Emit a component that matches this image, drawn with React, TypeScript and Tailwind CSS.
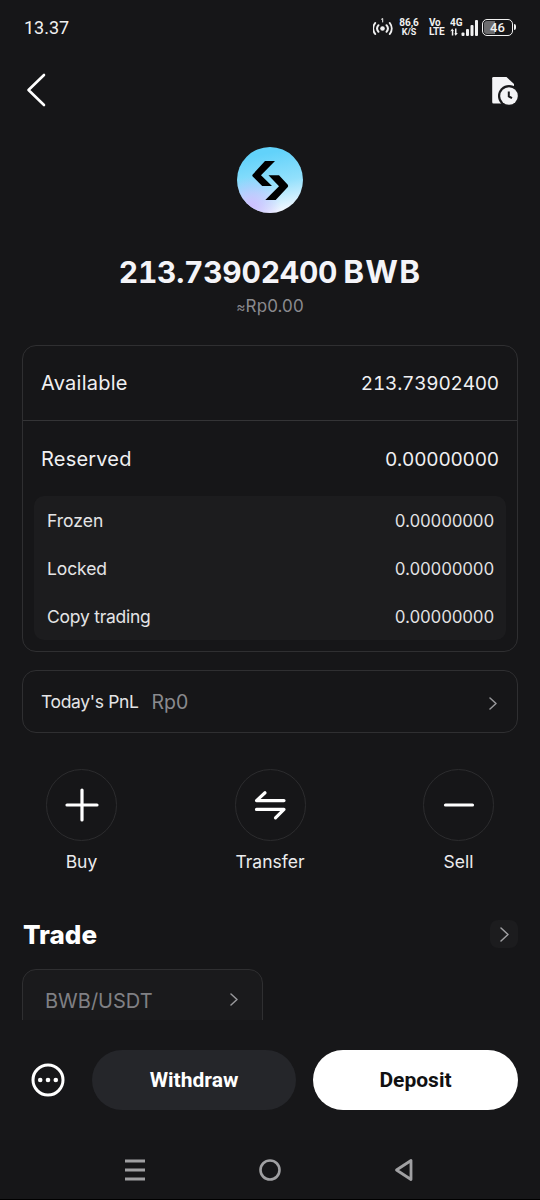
import { ReactNode } from "react";

const reserved = [
    { label: "Frozen", value: "0.00000000", tracking: "tracking-[0px]" },
    { label: "Locked", value: "0.00000000", tracking: "tracking-[-0.1px]" },
    { label: "Copy trading", value: "0.00000000", tracking: "tracking-[-0.25px]" },
];

function Chevron({ width, height, className }: { width: number; height: number; className?: string }) {
    return (
        <svg width={width} height={height} viewBox={`0 0 ${width} ${height}`} fill="none" className={className}>
            <path
                d={`M1 1L${width - 1} ${height / 2}L1 ${height - 1}`}
                stroke="currentColor"
                strokeWidth="1.5"
                strokeLinecap="round"
                strokeLinejoin="round"
            />
        </svg>
    );
}

function StatusBar() {
    return (
        <div className="flex h-14 items-center justify-between pl-6 pr-6 font-[Roboto,sans-serif] text-[#f1f1f1]">
            <span className="text-lg">13.37</span>
            <div className="flex h-[22px] items-center">
                <svg width="22" height="22" viewBox="0 0 22 22" fill="none" stroke="currentColor" strokeWidth="2" strokeLinecap="round">
                    <circle cx="9.500" cy="11.500" r="2.300" fill="currentColor" stroke="none" />
                    <path d="M5.500 8.200a5 5 0 0 0 0 6.600M13.500 8.200a5 5 0 0 1 0 6.600M2.200 6a9 9 0 0 0 0 11M16.800 6a9 9 0 0 1 0 11" />
                    <path d="M8.500 2.200L9.700 1.500V5" strokeWidth="1" />
                </svg>
                <div className="ml-[3px] mr-px w-[22px] -translate-y-px text-center font-bold">
                    <div className="text-[10px] leading-[10px] tracking-[-0.1px]">86,6</div>
                    <div className="text-[9px] leading-[9px]">K/S</div>
                </div>
                <div className="ml-[8px] w-[17px] -translate-y-px text-[10px] font-bold leading-[9px] tracking-[-0.3px]">
                    <div>Vo</div>
                    <div>LTE</div>
                </div>
                <svg width="30" height="20" viewBox="0 0 30 20" className="ml-[4px]" fill="currentColor">
                    <text x="0" y="8" fontSize="10" fontWeight="700">4G</text>
                    <path d="M2.200 10.500L4 13H3.300V17.500H1.800V12.800L0.200 13.500ZM5 10.500H6.500V15H7.800L5.700 17.800L4.200 15.500H5Z" />
                    <rect x="11.500" y="14.500" width="3" height="3.500" rx="1" />
                    <rect x="16" y="11" width="3" height="7" rx="1" />
                    <rect x="20.500" y="7" width="3" height="11" rx="1" />
                    <rect x="25" y="2" width="3" height="16" rx="1" />
                </svg>
                <div className="ml-[2px] flex h-[17px] w-[31px] -translate-y-px items-center justify-center rounded-[5px] border-[1.500px] border-[#f1f1f1] bg-linear-to-r from-[#6c6c6e] from-42% to-transparent to-42% bg-clip-content p-px">
                    <span className="text-[13px] font-medium leading-none">46</span>
                </div>
                <div className="ml-px h-[6px] w-[2px] -translate-y-px rounded-r bg-[#f1f1f1]" />
            </div>
        </div>
    );
}

function Header() {
    return (
        <div className="flex h-[72px] items-start justify-between pl-[26px] pr-[21px] pt-[16px]">
            <svg width="20" height="36" viewBox="0 0 20 36" fill="none">
                <path d="M18 3L2.500 18L18 33" stroke="#fff" strokeWidth="2.600" strokeLinecap="round" strokeLinejoin="round" />
            </svg>
            <svg width="28" height="32" viewBox="0 0 28 32" className="mt-[3px]" fill="none">
                <path d="M2.500 2H15.500L23 9V27.500Q23 28.500 22 28.500H2.500Q1.200 28.500 1.200 27V3.300Q1.200 2 2.500 2Z" fill="#f4f4f6" />
                <circle cx="18" cy="21" r="11" fill="#19191b" />
                <circle cx="18" cy="21" r="8.800" fill="#f4f4f6" />
                <path d="M17.800 16.500V21.500L21 23.200" stroke="#19191b" strokeWidth="2" />
            </svg>
        </div>
    );
}

function TokenLogo() {
    return (
        <svg width="66" height="66" viewBox="0 0 66 66">
            <defs>
                <linearGradient id="sky" x1="0.400" y1="0" x2="0.600" y2="1">
                    <stop offset="0.100" stopColor="#62d2fa" />
                    <stop offset="0.550" stopColor="#92e0fc" />
                    <stop offset="1" stopColor="#f6f8ff" />
                </linearGradient>
                <radialGradient id="violet" cx="0.220" cy="0.900" r="0.450">
                    <stop offset="0" stopColor="#cdbfff" />
                    <stop offset="1" stopColor="#c6b6ff" stopOpacity="0" />
                </radialGradient>
            </defs>
            <circle cx="33" cy="33" r="33" fill="url(#sky)" />
            <circle cx="33" cy="33" r="33" fill="url(#violet)" />
            <path d="M28 14H38L24 28.300L35 39H25.200L15.700 29.500Q14.900 28.500 15.700 27.500Z" fill="#000" />
            <path d="M31.500 28.300H42L50.800 37.800Q51.600 39 50.800 40L38.700 52.900H28.300L42 39.300Z" fill="#000" />
        </svg>
    );
}

function Action({ label, children }: { label: string; children: ReactNode }) {
    return (
        <div className="flex w-[71px] flex-col items-center">
            <div className="flex h-[72px] w-[71px] items-center justify-center rounded-full border-[1.500px] border-[#2c2c2e]">
                <svg width="36" height="36" viewBox="0 0 36 36" fill="none" stroke="#fff" strokeWidth="3.200" strokeLinecap="round" strokeLinejoin="round" className="shrink-0">
                    {children}
                </svg>
            </div>
            <span className="mt-[9px] whitespace-nowrap text-[17.500px] leading-6 text-[#ececee]">{label}</span>
        </div>
    );
}

function BalanceCard() {
    return (
        <div className="mt-[27px] h-[307px] rounded-[14px] border border-[#2f2f31]">
            <div className="flex h-[75px] items-center justify-between border-b border-[#343436] px-[18px] text-[#f0f0f2]">
                <span className="text-xl tracking-[0.25px]">Available</span>
                <span className="pt-[2px] text-[19px] tabular-nums tracking-[-0.2px]">213.73902400</span>
            </div>
            <div className="flex h-[75px] items-center justify-between px-[18px] text-[#f0f0f2]">
                <span className="pt-px text-xl tracking-[0.2px]">Reserved</span>
                <span className="pt-[3px] text-[19px] tabular-nums tracking-[-0.2px]">0.00000000</span>
            </div>
            <div className="mx-[11px] h-36 rounded-[10px] bg-[#1c1c1e] pl-[13px] pr-3">
                {reserved.map((row) => (
                    <div key={row.label} className="flex h-12 items-center justify-between pt-[2px] text-[#e4e4e6]">
                        <span className={`text-[17.500px] ${row.tracking}`}>{row.label}</span>
                        <span className="pt-px text-[16.700px] tabular-nums tracking-[-0.25px]">{row.value}</span>
                    </div>
                ))}
            </div>
        </div>
    );
}

export default function App() {
    return (
        <div className="flex h-[1200px] w-[540px] flex-col overflow-hidden bg-[#161618] font-[Inter,sans-serif]">
            <StatusBar />
            <Header />
            <div className="h-[892px] overflow-hidden px-[22px] pt-[19px]">
                <div className="flex flex-col items-center">
                    <TokenLogo />
                    <div className="mt-[39px] flex h-10 items-baseline gap-[6px] whitespace-nowrap text-[30px] font-bold leading-10 text-[#f4f4f8]">
                        <span className="tabular-nums tracking-[-0.25px]">213.73902400</span>
                        <span className="text-[31.500px] tracking-[1.200px]">BWB</span>
                    </div>
                    <div className="mt-[2px] h-6 text-[17px] leading-6 tracking-[0.1px] text-[#8a8a8e]">
                        <span className="text-[14px]">≈</span>Rp0.00
                    </div>
                </div>
                <BalanceCard />
                <div className="mt-[18px] flex h-[63px] items-center rounded-[14px] border border-[#2f2f31] pl-[18px] pr-[20px] pt-[2px]">
                    <span className="text-[17.500px] tracking-[-0.35px] text-[#e4e4e6]">Today's PnL</span>
                    <span className="ml-[13px] pt-px text-[19.500px] text-[#8a8a8e]">Rp0</span>
                    <Chevron width={8} height={13} className="ml-auto mt-px text-[#98989b]" />
                </div>
                <div className="mt-9 flex justify-between px-6">
                    <Action label="Buy">
                        <path d="M18 3V33M3 18H33" />
                    </Action>
                    <Action label="Transfer">
                        <path d="M32 13.600H4.500L13 5.800M4.500 22.400H32L23.500 30.800" />
                    </Action>
                    <Action label="Sell">
                        <path d="M4.500 18H31.500" />
                    </Action>
                </div>
                <div className="mt-[45px] flex h-[30px] items-center justify-between">
                    <h2 className="pl-px text-[26px] font-extrabold text-white">Trade</h2>
                    <div className="flex size-7 items-center justify-center rounded-lg bg-[#1c1c1e]">
                        <Chevron width={9} height={15} className="text-[#a0a0a3]" />
                    </div>
                </div>
                <div className="mt-[20px] flex h-[90px] w-[241px] items-start justify-between rounded-[14px] border border-[#2f2f31] bg-[#1a1a1c] pl-[22px] pr-6 pt-[19px]">
                    <span className="text-xl leading-6 text-[#808084]">BWB/USDT</span>
                    <Chevron width={8} height={13} className="mt-[4px] text-[#98989b]" />
                </div>
            </div>
            <div className="flex h-[120px] items-center bg-[#171719] pl-[31px] pr-[22px]">
                <svg width="34" height="34" viewBox="0 0 34 34" fill="none">
                    <circle cx="17" cy="17" r="15" stroke="#fff" strokeWidth="3" />
                    <circle cx="9.200" cy="17" r="2.300" fill="#fff" />
                    <circle cx="17" cy="17" r="2.300" fill="#fff" />
                    <circle cx="24.800" cy="17" r="2.300" fill="#fff" />
                </svg>
                <button className="ml-[27px] h-[60px] w-[204px] rounded-full bg-[#25262a] pt-[2px] font-[Roboto,sans-serif] text-[21px] font-bold text-white">Withdraw</button>
                <button className="ml-[17px] h-[60px] w-[205px] rounded-full bg-white pt-[2px] font-[Roboto,sans-serif] text-[21px] font-bold text-[#111112]">Deposit</button>
            </div>
            <div className="flex h-[60px] items-center justify-between border-b border-black pl-[124px] pr-[126px]">
                <svg width="22" height="24" viewBox="0 0 22 24" stroke="#a0a0a2" strokeWidth="2.800">
                    <path d="M1 3H21M1 12H21M1 21H21" />
                </svg>
                <svg width="24" height="24" viewBox="0 0 24 24" fill="none" stroke="#a0a0a2" strokeWidth="2.600">
                    <circle cx="12" cy="12" r="9.500" />
                </svg>
                <svg width="20" height="24" viewBox="0 0 20 24" fill="none" stroke="#a0a0a2" strokeWidth="2.800" strokeLinejoin="round">
                    <path d="M17 2.500V21.500L2.500 12Z" />
                </svg>
            </div>
        </div>
    );
}
